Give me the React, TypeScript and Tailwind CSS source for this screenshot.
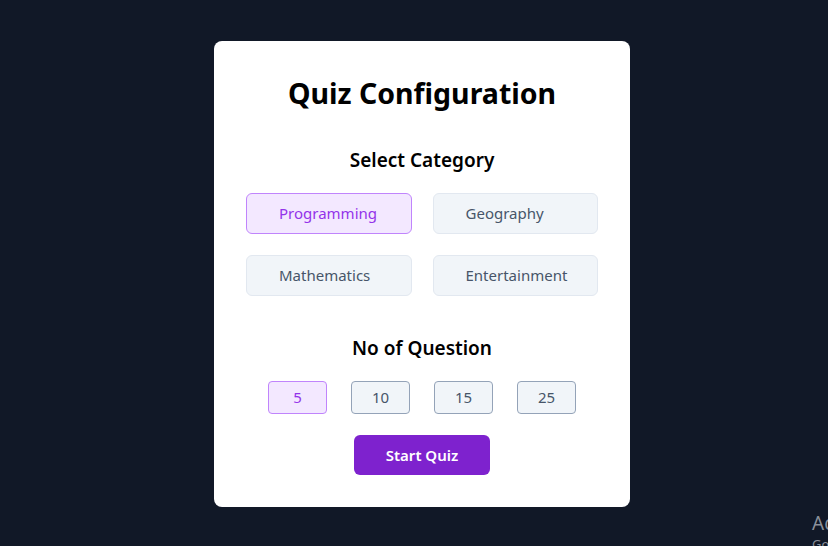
import React, { useState } from "react";

const categories = ["Programming", "Geography", "Mathematics", "Entertainment"];
const counts = [5, 10, 15, 25];

const App = () => {
  const [category, setCategory] = useState("Programming");
  const [count, setCount] = useState(5);

  return (
    <div
      className="relative h-[546px] w-full overflow-hidden bg-[#111827] flex items-center justify-center pl-4 pt-[2px]"
      style={{ fontFamily: '"Noto Sans", "Open Sans", sans-serif' }}
    >
      {/* Config card */}
      <div className="w-[416px] bg-white rounded-lg px-8 pt-[32px] pb-8 flex flex-col items-center">
        <h1 className="text-[28.5px] leading-10 font-bold text-black">Quiz Configuration</h1>

        <h2 className="mt-[33px] text-[19px] leading-7 font-semibold text-black">Select Category</h2>
        <div className="mt-[19px] w-full grid grid-cols-2 gap-x-[21px] gap-y-[21px]">
          {categories.map((c) => (
            <button
              key={c}
              onClick={() => setCategory(c)}
              className={`h-[41px] rounded-md border text-left pl-[32px] text-[15px] ${
                category === c
                  ? "bg-[#f3e8ff] border-[#c084fc] text-[#9333ea]"
                  : "bg-[#f1f5f9] border-[#e2e8f0] text-[#475569]"
              }`}
            >
              {c}
            </button>
          ))}
        </div>

        <h2 className="mt-[38px] text-[19px] leading-7 font-semibold text-black">No of Question</h2>
        <div className="mt-[19px] flex gap-6">
          {counts.map((n) => (
            <button
              key={n}
              onClick={() => setCount(n)}
              className={`w-[59px] h-[33px] rounded border text-[15px] ${
                count === n
                  ? "bg-[#f3e8ff] border-[#c084fc] text-[#9333ea]"
                  : "bg-[#f1f5f9] border-[#94a3b8] text-[#475569]"
              }`}
            >
              {n}
            </button>
          ))}
        </div>

        <button className="mt-[21px] w-[136px] h-10 rounded-md bg-[#7e22ce] text-white text-[15px] font-semibold">
          Start Quiz
        </button>
      </div>

      {/* Windows watermark */}
      <div className="absolute left-[812px] top-[512px] text-[#8b909a] whitespace-nowrap leading-tight">
        <div className="text-[19px]">Activate Windows</div>
        <div className="text-[13px]">Go to Settings to activate Windows.</div>
      </div>
    </div>
  );
};

export default App;
